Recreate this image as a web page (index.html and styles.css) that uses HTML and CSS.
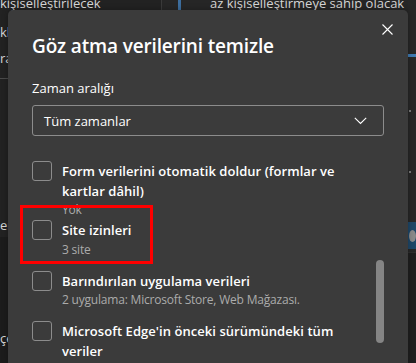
FILE: index.html
```html
<!DOCTYPE html>
<html lang="tr">
<head>
<meta charset="utf-8">
<title>Göz atma verilerini temizle</title>
<link rel="stylesheet" href="styles.css">
</head>
<body>
<div class="page">
  <div class="side-left">
    <div class="bk-text bk-first">kişiselleştirilecek</div>
    <div class="bk-text bk-l2">klasör</div>
    <div class="bk-text bk-l3">rapor</div>
    <div class="bk-rule"></div>
    <div class="bk-text bk-l4">erişim</div>
    <div class="bk-lower">
      <div class="bk-text bk-l5">çerez</div>
    </div>
  </div>
  <div class="vline"></div>
  <div class="side-main">
    <div class="main-col">
      <div class="topline">
        <span class="bluebar"></span>
        <span class="bk-text bk-first">az kişiselleştirmeye sahip olacak</span>
      </div>
    </div>
    <div class="edge">
      <div class="edge-blue"></div>
      <div class="edge-dot d1"></div>
      <div class="edge-dot d2"></div>
      <div class="edge-toggle"><span class="edge-knob"></span></div>
      <div class="edge-lower"></div>
    </div>
  </div>
</div>

<div class="dialog">
  <button class="close" aria-label="Kapat">
    <svg width="11" height="11" viewBox="0 0 11 11"><path d="M0.5 0.5 L10.5 10.5 M10.5 0.5 L0.5 10.5" stroke="#ffffff" stroke-width="1.1" fill="none"/></svg>
  </button>
  <h1 class="title">Göz atma verilerini temizle</h1>
  <div class="label">Zaman aralığı</div>
  <div class="select">
    <span>Tüm zamanlar</span>
    <svg width="13" height="8" viewBox="0 0 13 8"><path d="M0.8 0.8 L6.5 6.5 L12.2 0.8" stroke="#ffffff" stroke-width="1.1" fill="none"/></svg>
  </div>
  <div class="list">
    <div class="item item-tight">
      <span class="box"></span>
      <div class="texts">
        <div class="item-title">Form verilerini otomatik doldur (formlar ve<br>kartlar dâhil)</div>
        <div class="item-sub">Yok</div>
      </div>
    </div>
    <div class="item">
      <span class="box"></span>
      <div class="texts">
        <div class="item-title">Site izinleri</div>
        <div class="item-sub">3 site</div>
      </div>
    </div>
    <div class="item">
      <span class="box"></span>
      <div class="texts">
        <div class="item-title">Barındırılan uygulama verileri</div>
        <div class="item-sub">2 uygulama: Microsoft Store, Web Mağazası.</div>
      </div>
    </div>
    <div class="item">
      <span class="box"></span>
      <div class="texts">
        <div class="item-title">Microsoft Edge'in önceki sürümündeki tüm<br>veriler</div>
      </div>
    </div>
    <div class="scrollbar"></div>
    <div class="highlight"></div>
  </div>
</div>
</body>
</html>
```
FILE: styles.css
```css
* { box-sizing: border-box; }
html, body {
  margin: 0;
  padding: 0;
  width: 416px;
  height: 363px;
  overflow: hidden;
  background: #202020;
  font-family: "Open Sans", "Noto Sans", sans-serif;
}
body { position: relative; }

/* backdrop page */
.page {
  display: flex;
  height: 363px;
}
.side-left {
  width: 161px;
  display: flex;
  flex-direction: column;
  background: #222222;
}
.bk-text {
  color: #d6d6d6;
  font-size: 13px;
  line-height: 16px;
  white-space: nowrap;
}
.bk-first { margin-top: -5px; }
.bk-l2 { margin-top: 13px; }
.bk-l3 { margin-top: 10px; }
.bk-rule { height: 1px; background: #4a4a4a; margin-top: 12px; }
.bk-l4 { margin-top: 138px; }
.bk-lower {
  margin-top: 4px;
  flex: 1;
  background: #1c1c1c;
  padding-top: 93px;
}
.vline { width: 1px; background: #3a3a3a; }
.side-main {
  flex: 1;
  display: flex;
  background: #262626;
}
.main-col { flex: 1; }
.topline {
  display: flex;
  align-items: flex-start;
  gap: 29px;
  padding-left: 16px;
}
.bluebar { width: 3px; height: 12px; background: #3d6e9e; }
.edge {
  width: 8px;
  display: flex;
  flex-direction: column;
  background: #272727;
}
.edge-blue { height: 3px; margin-top: 54px; background: #3f7ab3; }
.edge-dot { width: 2px; height: 2px; background: #7a7a7a; margin-left: 1px; }
.d1 { margin-top: 53px; }
.d2 { margin-top: 59px; }
.edge-toggle {
  margin-top: 49px;
  height: 27px;
  background: #1e4768;
  display: flex;
  align-items: center;
}
.edge-knob {
  width: 12px; height: 12px; border-radius: 50%;
  background: #8a8a8a;
  margin-left: 1px;
}
.edge-lower { flex: 1; margin-top: 3px; background: #1f1f1f; border-top: 1px solid #2f2f2f; }

/* dialog overlay */
.dialog {
  position: absolute;
  left: 8px;
  top: 10px;
  width: 400px;
  height: 353px;
  overflow: hidden;
  background: #3b3b3b;
  border-radius: 5px 5px 0 0;
  padding: 22px 24px 0 24px;
  color: #ffffff;
  box-shadow: 0 0 6px rgba(0,0,0,0.3);
}
.close {
  position: absolute;
  top: 14px;
  right: 15px;
  width: 11px;
  height: 11px;
  padding: 0;
  border: 0;
  background: none;
  display: flex;
}
.title {
  margin: 0;
  font-size: 19px;
  font-weight: 600;
  line-height: 28px;
  letter-spacing: -0.15px;
}
.label {
  margin-top: 18px;
  font-size: 13px;
  line-height: 20px;
}
.select {
  margin-top: 7px;
  width: 352px;
  height: 31px;
  border: 1px solid #8c8c8c;
  border-radius: 3px;
  display: flex;
  align-items: center;
  justify-content: space-between;
  padding: 0 16px 0 11px;
  font-size: 13px;
}
.list {
  position: relative;
  margin-top: 25px;
  display: flex;
  flex-direction: column;
  gap: 12px;
}
.item {
  display: flex;
  gap: 10px;
  align-items: flex-start;
}
.item-tight { margin-bottom: -11px; }
.box {
  flex: none;
  width: 20px;
  height: 20px;
  border: 1px solid #8c8c8c;
  border-radius: 3px;
}
.texts { padding-top: 1px; }
.item-title {
  font-size: 13px;
  font-weight: 600;
  line-height: 19.5px;
  white-space: nowrap;
  letter-spacing: 0.05px;
}
.item-sub {
  font-size: 12px;
  line-height: 18px;
  color: #ababab;
  white-space: nowrap;
  letter-spacing: -0.2px;
}
.scrollbar {
  position: absolute;
  left: 344px;
  top: 99px;
  width: 8px;
  height: 83px;
  border-radius: 4px;
  background: #858585;
}
.highlight {
  position: absolute;
  left: -12px;
  top: 44px;
  width: 133px;
  height: 59px;
  border: 3px solid #ff0000;
}
```
